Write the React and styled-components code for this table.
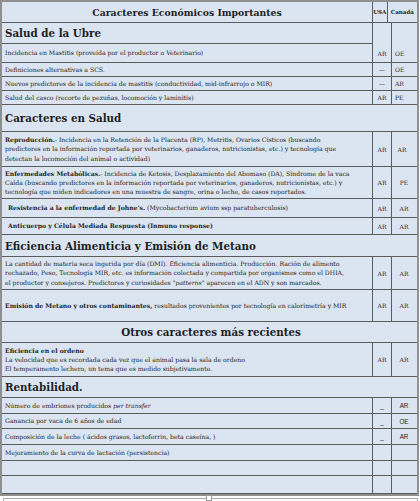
import React from "react";
import styled, { createGlobalStyle } from "styled-components";

const Global = createGlobalStyle`
  html, body { margin: 0; padding: 0; background: #ffffff; }
  body { font-family: "DejaVu Serif", serif; color: #1e1e1e; }
`;

const Page = styled.div`
  position: relative;
  width: 420px;
  height: 501px;
  overflow: hidden;
`;

const Table = styled.div`
  display: grid;
  grid-template-columns: 370px 19px 26px;
  grid-template-rows: 21px 21px 19px 14px 14px 14px 27px 35px 32px 19px 17px 22px 33px 32px 21px 34px 21px 16px 15px 16px 16px 15px 18px;
  width: 415px;
  border: 2px solid #8f8f8f;
  background: #dbe5f1;
`;

const Cell = styled.div`
  box-sizing: border-box;
  grid-column: ${(p) => (p.$span ? `span ${p.$span}` : "auto")};
  grid-row: ${(p) => (p.$rows ? `span ${p.$rows}` : "auto")};
  border-bottom: 1px solid #5c5c5c;
  display: flex;
  align-items: center;
  min-width: 0;
  overflow: hidden;
`;

const TitleCell = styled(Cell)`
  justify-content: center;
  font-family: "DejaVu Serif", serif;
  font-weight: bold;
  font-size: 9.3px;
`;

const Heading = styled(Cell)`
  justify-content: ${(p) => (p.$center ? "center" : "flex-start")};
  padding-left: 3px;
  font-family: "DejaVu Serif", serif;
  font-weight: bold;
  font-size: 10.3px;
`;

const Text = styled(Cell)`
  padding-left: ${(p) => (p.$indent ? 6 : 3)}px;
  font-family: "DejaVu Serif", serif;
  font-size: 6.15px;
  line-height: 9.3px;
  white-space: nowrap;
`;

const Value = styled(Cell)`
  border-left: 1px solid #5c5c5c;
  justify-content: ${(p) => (p.$left ? "flex-start" : "center")};
  align-items: ${(p) => (p.$bottom ? "flex-end" : "center")};
  padding-left: ${(p) => (p.$left ? 3 : 0)}px;
  padding-right: ${(p) => (p.$right ? p.$right : 0)}px;
  padding-bottom: ${(p) => (p.$bottom ? 5 : 0)}px;
  font-family: ${(p) => (p.$sans ? '"Liberation Sans", Arial, sans-serif' : '"DejaVu Serif", serif')};
  font-size: ${(p) => (p.$sans ? 6.3 : 6)}px;
`;

const Countries = styled(Cell)`
  grid-column: span 2;
  border-left: 1px solid #5c5c5c;
  align-items: stretch;
  font-family: "DejaVu Serif", serif;
  font-weight: bold;
  font-size: 5.6px;
`;

const Country = styled.div`
  display: flex;
  align-items: center;
  justify-content: center;
  width: ${(p) => p.$w}px;
  border-left: ${(p) => (p.$divider ? "1px solid #5c5c5c" : "none")};
  white-space: nowrap;
`;

const B = styled.strong`
  font-weight: bold;
`;

const I = styled.em`
  font-style: italic;
`;

const Footer = styled.div`
  margin: 2px 0 0 3px;
  width: 415px;
  height: 10px;
  border: 1px solid #a8a8a8;
  border-bottom: none;
  box-sizing: border-box;
`;

const Handle = styled.div`
  position: absolute;
  left: 206px;
  top: 495px;
  width: 4px;
  height: 4px;
  background: #fff;
  border: 1px solid #9a9a9a;
`;

export default function App() {
  return (
    <Page>
      <Global />
      <Table>
        <TitleCell>Caracteres Económicos Importantes</TitleCell>
        <Countries>
          <Country $w={14}>USA</Country>
          <Country $w={30} $divider>Canadá</Country>
        </Countries>

        <Heading>Salud de la Ubre</Heading>
        <Value $rows={2} $bottom>AR</Value>
        <Value $rows={2} $bottom $left>OE</Value>
        <Text>Incidencia en Mastitis (proveída por el productor o Veterinario)</Text>

        <Text>Definiciones alternativas a SCS.</Text>
        <Value>—</Value>
        <Value $left>OE</Value>

        <Text>Nuevos predictores de la incidencia de mastitis (conductividad, mid-infrarrojo o MIR)</Text>
        <Value>—</Value>
        <Value $left>AR</Value>

        <Text>Salud del casco (recorte de pezuñas, locomoción y laminitis)</Text>
        <Value>AR</Value>
        <Value $left>PE</Value>

        <Heading $span={3}>Caracteres en Salud</Heading>

        <Text>
          <div>
            <B>Reproducción.</B>- Incidencia en la Retención de la Placenta (RP), Metritis, Ovarios Císticos (buscando
            <br />
            predictores en la información reportada por veterinarios, ganaderos, nutricionistas, etc.) y tecnología que
            <br />
            detectan la locomoción del animal o actividad)
          </div>
        </Text>
        <Value>AR</Value>
        <Value $right={5}>AR</Value>

        <Text>
          <div>
            <B>Enfermedades Metabólicas.</B>- Incidencia de Ketosis, Desplazamiento del Abomaso (DA), Síndrome de la vaca
            <br />
            Caída (buscando predictores en la información reportada por veterinarios, ganaderos, nutricionistas, etc.) y
            <br />
            tecnología que miden indicadores en una muestra de sangre, orina o leche, de casos reportados.
          </div>
        </Text>
        <Value>AR</Value>
        <Value $right={1}>PE</Value>

        <Text $indent>
          <span>
            <B>Resistencia a la enfermedad de Johne's.</B> (Mycobacterium avium ssp paratuberculosis)
          </span>
        </Text>
        <Value>AR</Value>
        <Value $right={1}>AR</Value>

        <Text $indent>
          <B>Anticuerpo y Célula Mediada Respuesta (Inmuno response)</B>
        </Text>
        <Value>AR</Value>
        <Value $right={1}>AR</Value>

        <Heading $span={3}>Eficiencia Alimenticia y Emisión de Metano</Heading>

        <Text>
          <div>
            La cantidad de materia seca ingerida por día (DMI). Eficiencia alimenticia. Producción. Ración de alimento
            <br />
            rechazado, Peso, Tecnología MIR, etc. es información colectada y compartida por organismos como el DHIA,
            <br />
            el productor y consejeros. Predictores y curiosidades <I>"patterns"</I> aparecen en el ADN y son marcados.
          </div>
        </Text>
        <Value>AR</Value>
        <Value $right={1}>AR</Value>

        <Text>
          <span>
            <B>Emisión de Metano y otros contaminantes,</B> resultados provenientes por tecnología en calorimetría y MIR
          </span>
        </Text>
        <Value>AR</Value>
        <Value $right={1}>AR</Value>

        <Heading $span={3} $center>Otros caracteres más recientes</Heading>

        <Text>
          <div>
            <B>Eficiencia en el ordeno</B>
            <br />
            La velocidad que es recordada cada vez que el animal pasa la sala de ordeno
            <br />
            El temperamento lechero, un tema que es medido subjetivamente.
          </div>
        </Text>
        <Value>AR</Value>
        <Value $right={1}>AR</Value>

        <Heading $span={3}>Rentabilidad.</Heading>

        <Text>
          <span>
            Número de embriones producidos <I>per transfer</I>
          </span>
        </Text>
        <Value $sans>_</Value>
        <Value $sans $right={1}>AR</Value>

        <Text>Ganancia por vaca de 6 años de edad</Text>
        <Value $sans>_</Value>
        <Value $sans $right={1}>OE</Value>

        <Text>Composición de la leche ( ácidos grasos, lactoferrin, beta caseína, )</Text>
        <Value $sans>_</Value>
        <Value $sans $right={1}>AR</Value>

        <Text>Mejoramiento de la curva de lactación (persistencia)</Text>
        <Value />
        <Value />

        <Text />
        <Value />
        <Value />

        <Text />
        <Value />
        <Value />
      </Table>
      <Footer />
      <Handle />
    </Page>
  );
}
